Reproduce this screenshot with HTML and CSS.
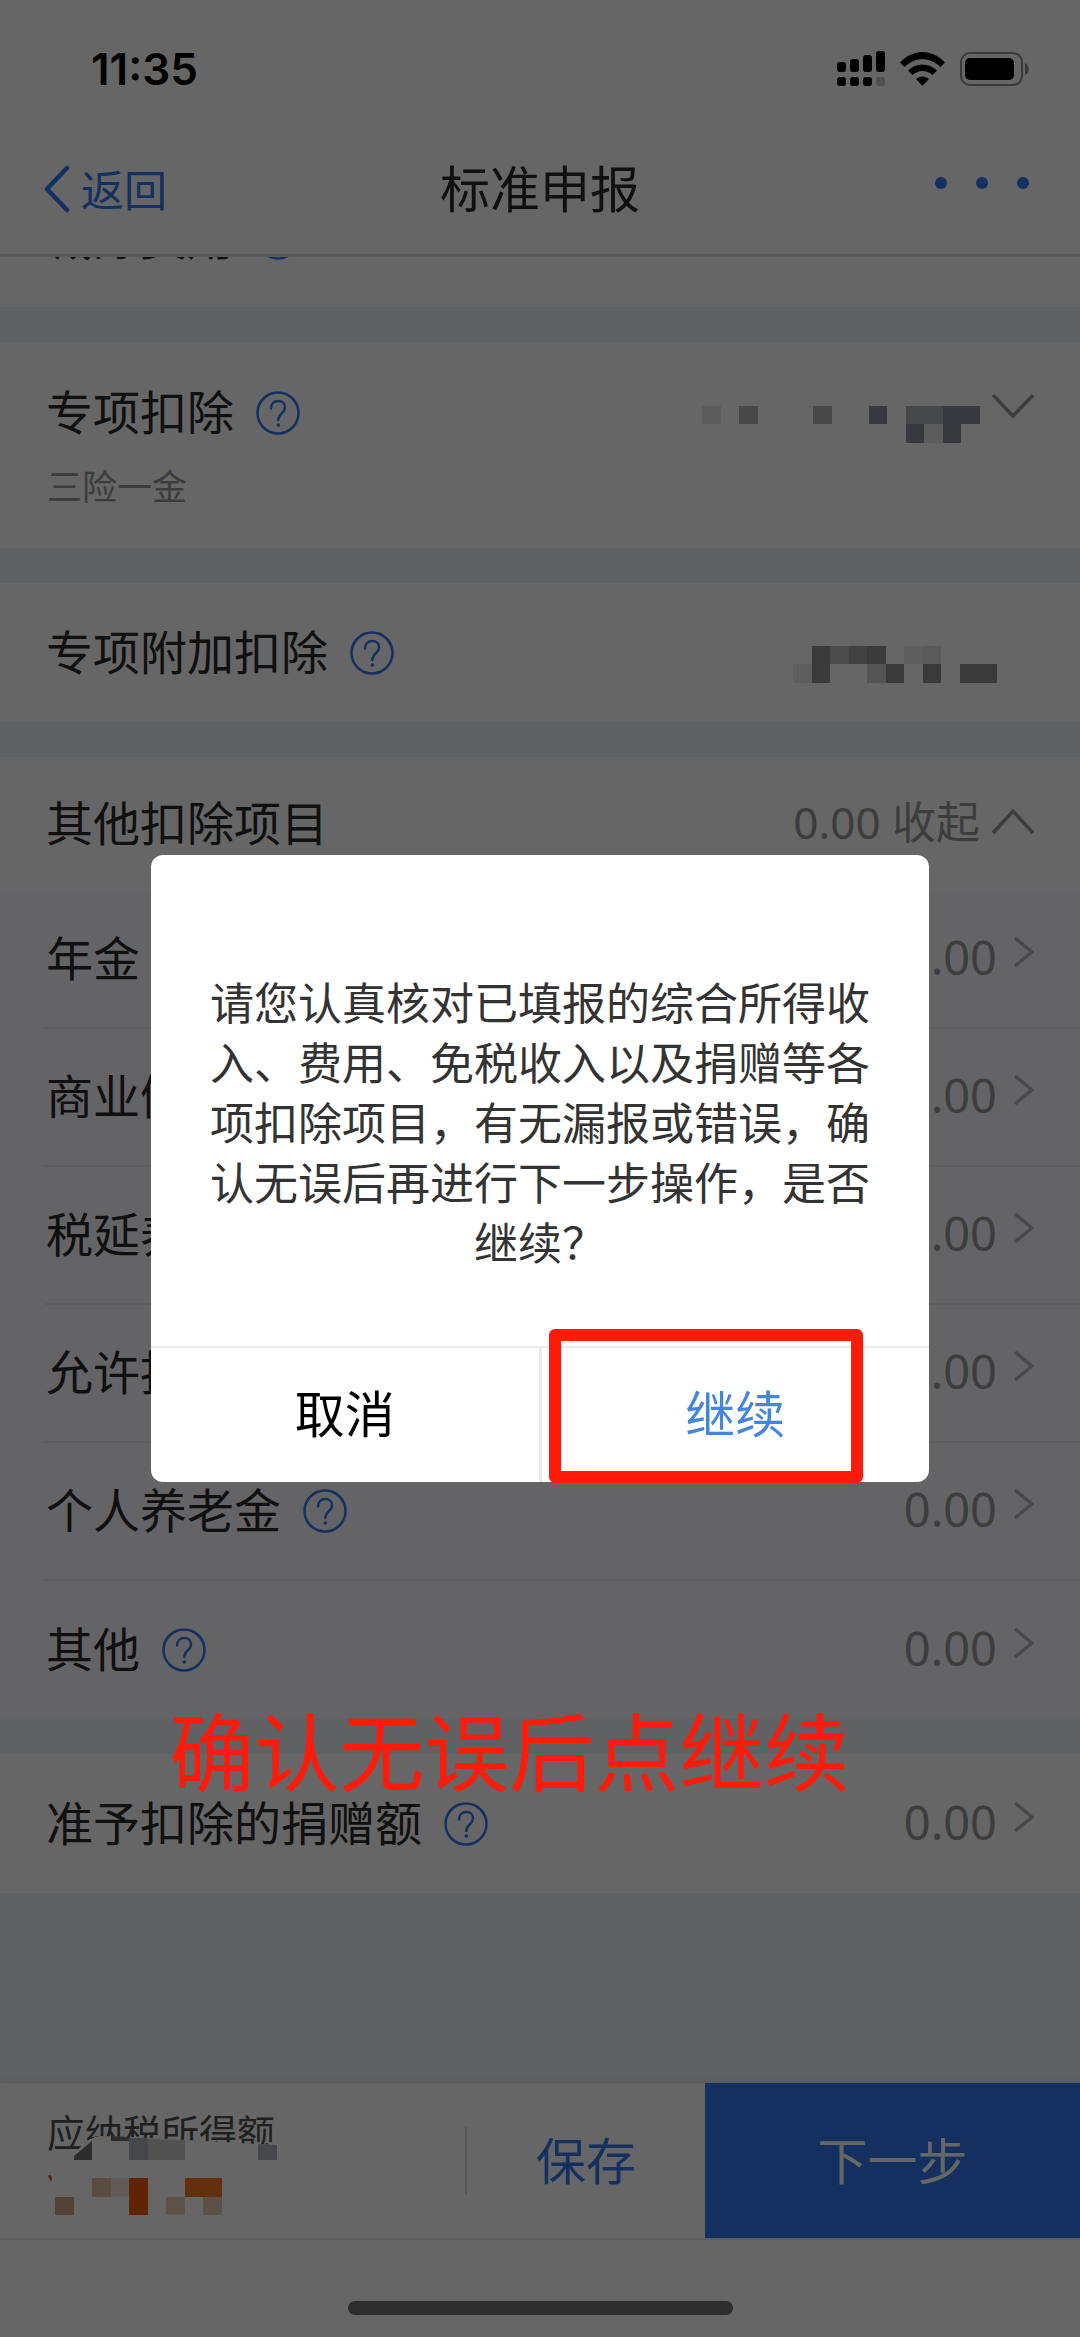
FILE: index.html
```html
<!DOCTYPE html>
<html lang="zh-CN">
<head>
<meta charset="utf-8">
<meta name="viewport" content="width=device-width, initial-scale=1">
<title>标准申报</title>
<link rel="stylesheet" href="styles.css">
</head>
<body>
<svg class="defs" aria-hidden="true">
  <symbol id="help" viewBox="0 0 44 44">
    <circle cx="22" cy="22" r="20.5" fill="none" stroke="currentColor" stroke-width="2.5"/>
    <path d="M15 17.5c0-4.5 3-7.500 7.200-7.500 4 0 6.900 2.700 6.900 6.300 0 5.700-6.800 6.200-6.800 12.700" fill="none" stroke="currentColor" stroke-width="2.500" stroke-linecap="round"/>
    <circle cx="22.300" cy="34" r="1.800" fill="currentColor"/>
  </symbol>
  <symbol id="next" viewBox="0 0 20 40">
    <path d="M1 1l17 14L1 29" fill="none" stroke="currentColor" stroke-width="3.500"/>
  </symbol>
</svg>

<div class="app">
  <header class="header">
    <div class="status">
      <span class="time">11:35</span>
      <div class="status-icons">
        <svg width="48" height="36" viewBox="0 0 48 36" aria-hidden="true">
          <rect x="0" y="11" width="9" height="10" rx="3"/><rect x="13" y="8" width="9" height="13" rx="3"/><rect x="26" y="4" width="9" height="17" rx="3"/><rect x="39" y="0" width="9" height="21" rx="3"/>
          <rect x="0" y="26" width="9" height="9" rx="3"/><rect x="13" y="26" width="9" height="9" rx="3"/><rect x="26" y="26" width="9" height="9" rx="3"/><rect x="39" y="26" width="9" height="9" rx="3" fill="#c8c8c8"/>
        </svg>
        <svg width="45" height="34" viewBox="0 0 45 34" aria-hidden="true">
          <path d="M0 10.500C13-3.500 32-3.500 45 10.500L40.500 15C30 4.500 15 4.500 4.500 15Z"/>
          <path d="M8 18.500C16 10.500 29 10.500 37 18.500L32.500 23C26 17.500 19 17.500 12.500 23Z"/>
          <path d="M16 27C19.500 23.500 25.500 23.500 29 27L22.500 34Z"/>
        </svg>
        <svg width="69" height="34" viewBox="0 0 69 34" aria-hidden="true">
          <rect x="1" y="1" width="61" height="32" rx="9" fill="none" stroke="#909090" stroke-width="2"/>
          <rect x="5" y="6" width="49" height="22" rx="5"/>
          <path d="M65 11c5 2 5 10 0 12z" fill="#909090"/>
        </svg>
      </div>
    </div>
    <nav class="nav">
      <a class="back" href="#"><svg width="26" height="48" viewBox="0 0 26 48" aria-hidden="true"><path d="M23 3L3 24l20 21" fill="none" stroke="currentColor" stroke-width="4.500" stroke-linecap="round" stroke-linejoin="round"/></svg><span class="back-text">返回</span></a>
      <h1 class="title">标准申报</h1>
      <button class="more" type="button" aria-label="更多"><svg width="94" height="24" viewBox="0 0 94 24"><circle cx="6" cy="6" r="6"/><circle cx="47" cy="6" r="6"/><circle cx="88" cy="6" r="6"/></svg></button>
    </nav>
  </header>

  <main class="content">
    <section class="card card-scrolled">
      <h2 class="label">减除费用</h2>
      <button class="help" type="button" aria-label="说明"><svg><use href="#help"/></svg></button>
    </section>

    <section class="card card-tall">
      <div class="card-line">
        <h2 class="label">专项扣除</h2>
        <button class="help" type="button" aria-label="说明"><svg><use href="#help"/></svg></button>
        <div class="side">
          <svg class="masked-wide" viewBox="0 -0.240 15 3.240" shape-rendering="crispEdges" aria-hidden="true">
            <path fill="#e6e6e6" d="M0 1h1v1H0zM12 2h1v1h-1z"/>
            <path fill="#b4b4b4" d="M2 1h1v1H2zM6 1h1v1H6z"/>
            <path fill="#b0b2b6" d="M11 1h2v1h-2z"/>
            <path fill="#8c8e96" d="M9 1h1v1H9zM13 1h2v1h-2zM11 2h1v1h-1zM13 2h1v1h-1z"/>
          </svg>
          <svg class="fold" viewBox="0 0 42 38" aria-hidden="true"><path d="M1 1l20 21L41 1" fill="none" stroke="currentColor" stroke-width="3.500"/></svg>
        </div>
      </div>
      <p class="note">三险一金</p>
    </section>

    <section class="card">
      <h2 class="label">专项附加扣除</h2>
      <button class="help" type="button" aria-label="说明"><svg><use href="#help"/></svg></button>
      <div class="side side-inset">
        <svg class="masked" viewBox="0 -0.270 11 3.270" shape-rendering="crispEdges" aria-hidden="true">
          <path fill="#ececec" d="M0 2h1v1H0zM6 1h1v1H6z"/>
          <path fill="#e0e0e0" d="M7 1h1v1H7z"/>
          <path fill="#d2d2d2" d="M4 2h1v1H4z"/>
          <path fill="#bcbcbc" d="M2 1h1v1H2z"/>
          <path fill="#a6a6a6" d="M3 1h1v1H3z"/>
          <path fill="#929292" d="M1 1h1v2H1zM4 1h1v1H4zM5 2h1v1H5zM7 2h1v1H7zM9 2h2v1H9z"/>
        </svg>
      </div>
    </section>

    <section class="group">
      <div class="group-head">
        <h2 class="label">其他扣除项目</h2>
        <button class="side toggle" type="button">0.00 收起<svg class="fold" viewBox="0 0 42 38" aria-hidden="true"><path d="M1 30L21 8l20 22" fill="none" stroke="currentColor" stroke-width="3.500"/></svg></button>
      </div>
      <ul class="items">
        <li class="item"><span class="label">年金</span><a class="side value" href="#">0.00<svg class="arrow"><use href="#next"/></svg></a></li>
        <li class="item"><span class="label">商业健康保险</span><a class="side value" href="#">0.00<svg class="arrow"><use href="#next"/></svg></a></li>
        <li class="item"><span class="label">税延养老保险</span><a class="side value" href="#">0.00<svg class="arrow"><use href="#next"/></svg></a></li>
        <li class="item"><span class="label">允许扣除的税费</span><a class="side value" href="#">0.00<svg class="arrow"><use href="#next"/></svg></a></li>
        <li class="item"><span class="label">个人养老金</span><button class="help" type="button" aria-label="说明"><svg><use href="#help"/></svg></button><a class="side value" href="#">0.00<svg class="arrow"><use href="#next"/></svg></a></li>
        <li class="item"><span class="label">其他</span><button class="help" type="button" aria-label="说明"><svg><use href="#help"/></svg></button><a class="side value" href="#">0.00<svg class="arrow"><use href="#next"/></svg></a></li>
      </ul>
    </section>

    <section class="card">
      <h2 class="label">准予扣除的捐赠额</h2>
      <button class="help" type="button" aria-label="说明"><svg><use href="#help"/></svg></button>
      <a class="side value" href="#">0.00<svg class="arrow"><use href="#next"/></svg></a>
    </section>
  </main>

  <footer class="footer">
    <div class="bar">
      <div class="total">
        <span class="total-label">应纳税所得额</span>
        <svg class="total-mask" viewBox="0 0 240 84" aria-hidden="true">
          <path fill="#fff" d="M24 28C30 16 38 6 52 4L82 5 138 8 210 12 240 13V84H24z"/>
          <path fill="#6e6e6e" d="M26 28V24L44 9V28zM63 4L82 5V9H63z"/>
          <path fill="#b0b2ba" d="M81 6h19v22H81zM210 12l19 1v15h-19z"/>
          <path fill="#cecece" d="M100 7l37 1v20h-37z"/>
          <path fill="#d4600c" d="M0 44c3-3 5 2 3 6z"/>
          <path fill="#d2a48c" d="M7 65h19v18H7z"/>
          <path fill="#e2bea4" d="M44 46h19v19H44z"/>
          <path fill="#f4e2d8" d="M63 46h18v19H63z"/>
          <path fill="#f05c00" d="M81 46h19v37H81z"/>
          <path fill="#e8cbb4" d="M118 65h19v18h-19z"/>
          <path fill="#f87620" d="M137 46h37v19h-37z"/>
          <path fill="#e2ceb6" d="M155 65h19v18h-19z"/>
        </svg>
      </div>
      <button class="save" type="button">保存</button>
      <button class="submit" type="button">下一步</button>
    </div>
    <div class="home"><span class="home-bar"></span></div>
  </footer>
</div>

<div class="overlay">
  <div class="dialog" role="dialog" aria-modal="true" aria-labelledby="dialog-text">
    <p class="dialog-text" id="dialog-text">请您认真核对已填报的综合所得收入、费用、免税收入以及捐赠等各项扣除项目，有无漏报或错误，确认无误后再进行下一步操作，是否继续？</p>
    <div class="dialog-actions">
      <button class="cancel" type="button">取消</button>
      <button class="confirm" type="button">继续</button>
    </div>
    <span class="marker"></span>
    <p class="hint">确认无误后点继续</p>
  </div>
</div>
</body>
</html>
```
FILE: styles.css
```css
* { box-sizing: border-box; }

body {
  margin: 0;
  font-family: "Noto Sans CJK SC", sans-serif;
  font-size: 47px;
  color: #282828;
  background: #fff;
}

h1, h2, p, ul { margin: 0; padding: 0; font-weight: 400; }
ul { list-style: none; }
a { color: inherit; text-decoration: none; }

button {
  margin: 0;
  padding: 0;
  border: 0;
  background: none;
  font: inherit;
  color: inherit;
}

svg { display: block; flex: none; }
.defs { position: absolute; width: 0; height: 0; }

.app {
  display: flex;
  flex-direction: column;
  height: 100vh;
}

/* status bar and navigation */
.header { flex: none; border-bottom: 3px solid #e2e2e2; }

.status {
  display: flex;
  align-items: center;
  justify-content: space-between;
  height: 124px;
  padding: 14px 51px 0 91px;
  color: #000;
}

.time {
  font-family: Inter, sans-serif;
  font-size: 44px;
  font-weight: 600;
  line-height: 48px;
}

.status-icons { display: flex; align-items: center; gap: 15px; }

.nav {
  display: grid;
  grid-template-columns: 1fr auto 1fr;
  align-items: center;
  height: 130px;
  padding: 0 44px;
  color: #3078f0;
}

.back {
  display: flex;
  align-items: center;
  gap: 11px;
  font-size: 43px;
  line-height: 60px;
}

.back-text { padding-bottom: 2px; }
.title { padding-bottom: 6px; font-size: 50px; line-height: 72px; color: #282828; }
.more { justify-self: end; padding-right: 7px; }
.more svg { fill: currentColor; }

/* scrolling list */
.content {
  flex: 1;
  min-height: 0;
  overflow: hidden;
  display: flex;
  flex-direction: column;
  gap: 35px;
  background: #f0f2f7;
}

.card {
  flex: none;
  display: flex;
  align-items: center;
  min-height: 139px;
  padding: 0 46px;
  background: #fff;
}

.card-scrolled { margin-top: -89px; }

.card-tall {
  flex-direction: column;
  align-items: stretch;
  gap: 14px;
  padding-top: 38px;
  padding-bottom: 38px;
}

.card-line { display: flex; align-items: center; }
.label { padding-bottom: 6px; font-size: 47px; line-height: 60px; }
.note { padding-left: 1px; font-size: 35px; line-height: 50px; color: #969696; }

.help { margin-left: 22px; color: #3078f0; }
.help svg { width: 44px; height: 44px; }

.side {
  display: flex;
  align-items: center;
  margin-left: auto;
  gap: 12px;
  color: #989898;
}

.side-inset { padding-right: 37px; }
.masked-wide { width: 278px; height: 60px; }
.masked { width: 204px; height: 61px; }
.fold { width: 42px; height: 38px; }

.group { flex: none; background: #fff; }

.group-head {
  display: flex;
  align-items: center;
  height: 134px;
  padding: 0 46px;
}

.toggle {
  padding-bottom: 4px;
  font-family: "Noto Sans", "Noto Sans CJK SC", sans-serif;
  font-size: 44px;
  line-height: 60px;
}

.items { background: #fafbfe; }

.item {
  display: flex;
  align-items: center;
  height: 138px;
  margin-left: 44px;
  padding: 0 46px 0 2px;
  border-bottom: 2px solid #ebebee;
}

.item:last-child { border-bottom: 0; }

.value {
  gap: 17px;
  padding-bottom: 4px;
  font-family: "Noto Sans", sans-serif;
  line-height: 62px;
}

.arrow { width: 20px; height: 40px; color: #b4b4b4; }

/* totals and actions */
.footer { flex: none; position: relative; box-shadow: 0 -2px 4px rgba(0, 0, 0, .08); }

.bar {
  display: flex;
  height: 157px;
  border-bottom: 2px solid #e8e8e8;
}

.total {
  position: relative;
  flex: 1;
  padding: 22px 0 0 47px;
}

.total::after {
  content: "";
  position: absolute;
  right: 0;
  top: 44px;
  width: 2px;
  height: 68px;
  background: #dadada;
}

.total-label { display: block; font-size: 38px; line-height: 52px; color: #505050; }
.total-mask { position: absolute; left: 48px; top: 49px; width: 240px; height: 84px; }

.bar button { padding-bottom: 6px; font-size: 50px; }
.save { width: 238px; color: #3078f0; }
.submit { width: 375px; color: #fff; background: #3078f0; }

.home { display: flex; justify-content: center; height: 97px; padding-top: 61px; background: #fff; }
.home-bar { width: 385px; height: 14px; border-radius: 7px; background: #707070; }

/* confirmation dialog */
.overlay {
  position: fixed;
  inset: 0;
  display: grid;
  place-items: center;
  background: rgba(0, 0, 0, .6);
}

.dialog {
  position: relative;
  width: 72%;
  border-radius: 12px;
  background: #fff;
}

.dialog-text {
  padding: 116px 58px 75px;
  font-size: 44px;
  line-height: 60px;
  color: #333;
  text-align: center;
}

.dialog-actions { display: flex; height: 136px; border-top: 2px solid #ebebeb; }
.dialog-actions button { flex: 1; padding-bottom: 8px; font-size: 50px; }
.cancel { color: #000; border-right: 3px solid #ebebeb; }
.confirm { color: #4486dc; }

.marker {
  position: absolute;
  right: 66px;
  bottom: -1px;
  width: 314px;
  height: 154px;
  border: 12px solid #ff1a0a;
  border-radius: 6px;
  pointer-events: none;
}

.hint {
  position: absolute;
  left: 18px;
  top: calc(100% + 206px);
  font-size: 85px;
  line-height: 120px;
  white-space: nowrap;
  color: #ff1a0a;
}
```
